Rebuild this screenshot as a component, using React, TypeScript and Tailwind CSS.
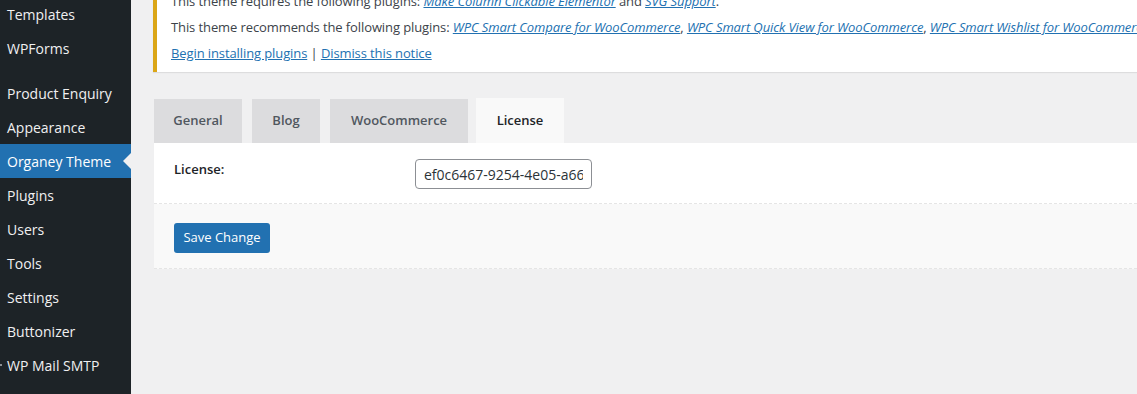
const MENU_TOP = [
  { key: "templates", label: "Templates" },
  { key: "wpforms", label: "WPForms" },
];

const MENU_MAIN = [
  { key: "enquiry", label: "Product Enquiry" },
  { key: "appearance", label: "Appearance" },
  { key: "organey", label: "Organey Theme", active: true },
  { key: "plugins", label: "Plugins" },
  { key: "users", label: "Users" },
  { key: "tools", label: "Tools" },
  { key: "settings", label: "Settings" },
  { key: "buttonizer", label: "Buttonizer" },
  { key: "smtp", label: "WP Mail SMTP", dot: true },
];

const TABS = [
  { key: "general", label: "General", width: "w-[88px]" },
  { key: "blog", label: "Blog", width: "w-[68px]" },
  { key: "woo", label: "WooCommerce", width: "w-[138px]" },
  { key: "license", label: "License", width: "w-[88px]", active: true },
];

const FONT = { fontFamily: '"Open Sans", "Noto Sans", sans-serif' };

type Item = { key: string; label: string; active?: boolean; dot?: boolean };

const MenuItem = ({ item }: { item: Item }) => (
  <div
    className={`relative flex h-[34px] items-center text-[14px] text-[#f0f0f1] ${
      item.active ? "bg-[#2271b1] text-white" : ""
    } ${item.dot ? "pl-0" : "pl-[7px]"}`}
  >
    {item.dot && <span className="mr-[5px] h-[2px] w-[2px] bg-[#8c8f94]" />}
    <span>{item.label}</span>
    {item.active && (
      <span className="absolute right-0 top-[9px] h-0 w-0 border-y-8 border-r-8 border-y-transparent border-r-[#f0f0f1]" />
    )}
  </div>
);

const Link = ({ children, italic }: { children: string; italic?: boolean }) => (
  <a href="#" className={`text-[#2271b1] underline ${italic ? "italic" : ""}`}>
    {children}
  </a>
);

export default function App() {
  return (
    <div className="flex h-[394px] w-[1137px] overflow-hidden bg-[#f0f0f1]" style={FONT}>
      <aside className="w-[131px] shrink-0 bg-[#1d2327]">
        <div className="-mt-[3px]">
          {MENU_TOP.map((item) => (
            <MenuItem key={item.key} item={item} />
          ))}
        </div>
        <div className="mt-[11px]">
          {MENU_MAIN.map((item) => (
            <MenuItem key={item.key} item={item} />
          ))}
        </div>
      </aside>

      <main className="min-w-0 flex-1 overflow-hidden pl-[22px]">
        <div className="-mt-[11px] w-[1200px] whitespace-nowrap border-l-4 border-[#dba617] bg-white pb-[5px] pl-[14px] text-[13px] tracking-[-0.1px] text-[#3c434a] shadow-[0_1px_1px_rgba(0,0,0,0.08)]">
          <p className="flex h-[26px] items-center">
            This theme requires the following plugins:&nbsp;
            <Link italic>Make Column Clickable Elementor</Link>&nbsp;and&nbsp;
            <Link italic>SVG Support</Link>.
          </p>
          <p className="flex h-[26px] items-center">
            This theme recommends the following plugins:&nbsp;
            <Link italic>WPC Smart Compare for WooCommerce</Link>,&nbsp;
            <Link italic>WPC Smart Quick View for WooCommerce</Link>,&nbsp;
            <Link italic>WPC Smart Wishlist for WooCommerce</Link>
          </p>
          <p className="flex h-[26px] items-center">
            <Link>Begin installing plugins</Link>&nbsp;|&nbsp;<Link>Dismiss this notice</Link>
          </p>
        </div>

        <div className="ml-px mt-[26px]">
          <div className="flex items-end">
            {TABS.map((tab, i) => (
              <div
                key={tab.key}
                className={`flex items-center justify-center text-[13px] font-semibold ${tab.width} ${
                  tab.active
                    ? "h-[45px] bg-[#f9f9f9] text-[#1d2327]"
                    : "h-[44px] bg-[#dcdcde] text-[#50575e]"
                } ${i === 0 ? "" : i === 3 ? "ml-[8px]" : "ml-[10px]"}`}
              >
                {tab.label}
              </div>
            ))}
          </div>

          <div className="bg-white">
            <div className="flex h-[61px] border-b border-dashed border-[#e5e5e5] pt-[16px]">
              <div className="w-[261px] pl-[20px] pt-[1px] text-[13px] font-semibold text-[#1d2327]">
                License:
              </div>
              <input
                readOnly
                value="ef0c6467-9254-4e05-a661-3b2f8c9d1e74"
                className="h-[30px] w-[177px] rounded-[4px] border border-[#8c8f94] bg-white px-[8px] text-[14px] text-[#2c3338] outline-none"
                style={FONT}
              />
            </div>
            <div className="h-[65px] border-b border-dashed border-[#e5e5e5] bg-[#f9f9f9] pl-[20px] pt-[19px]">
              <button className="h-[30px] w-[96px] rounded-[3px] bg-[#2271b1] text-[13px] text-white">
                Save Change
              </button>
            </div>
          </div>
        </div>
      </main>
    </div>
  );
}
